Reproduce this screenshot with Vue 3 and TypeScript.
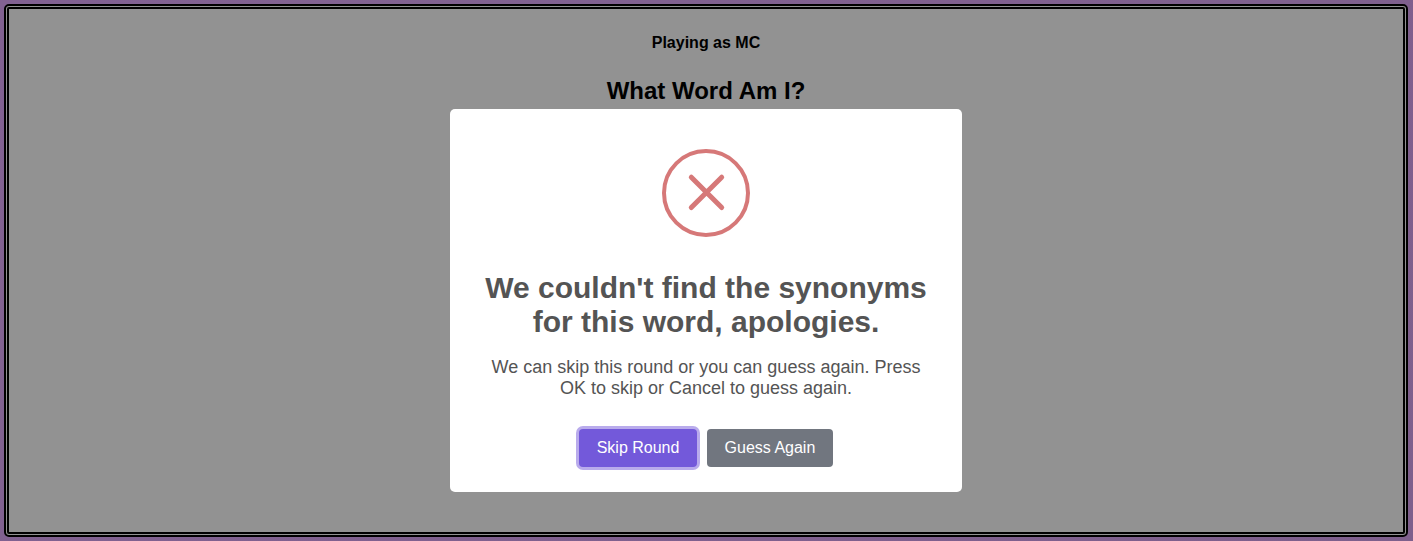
<script setup lang="ts">
const player: string = 'MC'
</script>

<template>
  <div class="page">
    <main class="board">
      <p class="player">Playing as {{ player }}</p>
      <h2 class="heading">What Word Am I?</h2>
    </main>
    <div class="overlay">
      <section class="popup" role="dialog" aria-modal="true">
        <svg class="icon" viewBox="0 0 88 88" fill="none" stroke="#d67878">
          <circle cx="44" cy="44" r="42" stroke-width="4" />
          <path d="M29.3 28.2L59.7 58.6M59.7 28.2L29.3 58.6" stroke-width="5" stroke-linecap="round" />
        </svg>
        <h2 class="title">We couldn't find the synonyms for this word, apologies.</h2>
        <div class="message">We can skip this round or you can guess again. Press OK to skip or Cancel to guess again.</div>
        <div class="actions">
          <button type="button" class="btn confirm">Skip Round</button>
          <button type="button" class="btn cancel">Guess Again</button>
        </div>
      </section>
    </div>
  </div>
</template>

<style>
html,
body {
  margin: 0;
  overflow: hidden;
}
</style>

<style scoped>
.page {
  position: relative;
  box-sizing: border-box;
  height: 541px;
  padding: 4px 5px 4px 4px;
  background: linear-gradient(135deg, #826292, #7e5f8c);
  font-family: "Liberation Sans", Arial, Helvetica, sans-serif;
}
.board {
  box-sizing: border-box;
  height: 533px;
  border: 5px double #000;
  border-radius: 5px;
  background: #929292;
  text-align: center;
  color: #000;
}
.player {
  margin: 25px 0 0;
  font-size: 16px;
  line-height: 18px;
  font-weight: 700;
}
.heading {
  margin: 25px 0 0;
  font-size: 24px;
  line-height: 27px;
  font-weight: 700;
}
.overlay {
  position: absolute;
  inset: 0 1px 0 0;
  display: flex;
  justify-content: center;
  align-items: flex-start;
  padding-top: 109px;
}
.popup {
  box-sizing: border-box;
  width: 512px;
  height: 383px;
  border-radius: 5px;
  background: #fff;
  color: #545454;
  text-align: center;
}
.icon {
  display: block;
  width: 88px;
  height: 88px;
  margin: 40px auto 9.6px;
}
.title {
  margin: 0;
  padding: 24px 30px 0;
  font-size: 30px;
  line-height: 34px;
  font-weight: 600;
}
.message {
  margin: 18px 28.8px 5.4px;
  font-size: 18px;
  line-height: 21px;
}
.actions {
  display: flex;
  justify-content: center;
  gap: 10px;
  margin-top: 30px;
}
.btn {
  height: 38px;
  padding: 0 17.6px;
  border: 0;
  border-radius: 4px;
  color: #fff;
  font: 400 16px "Liberation Sans", Arial, Helvetica, sans-serif;
}
.confirm {
  background: #7359da;
  box-shadow: 0 0 0 3px #b9abec;
}
.cancel {
  background: #71767f;
}
</style>
